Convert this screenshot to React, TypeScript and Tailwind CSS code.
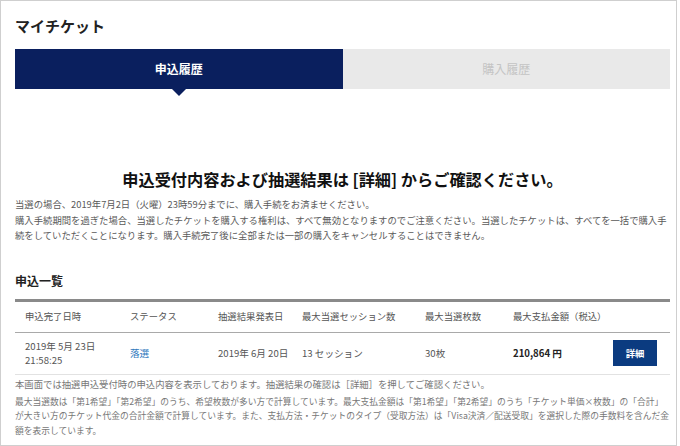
import React from "react";

const font = { fontFamily: '"Noto Sans CJK JP", "Noto Sans", sans-serif' };

const columns = "grid grid-cols-[105px_88px_84px_123px_88px_100px_44px_13px] pl-[10px]";

export default function App() {
  return (
    <div className="w-[680px] h-[446px] bg-white" style={font}>
      <div className="w-[677px] h-[446px] border border-[#cfcfcf] pl-[14px] pr-[6px] flex flex-col">
        {/* page title */}
        <h1 className="h-[48px] pt-[14px] text-[15px] leading-[22px] font-bold text-[#222]">
          マイチケット
        </h1>

        {/* tabs */}
        <div className="flex h-[40px]">
          <div className="relative flex-1 bg-[#0a1f5e] flex items-center justify-center text-white text-[12px] font-bold">
            申込履歴
            <span className="absolute left-1/2 -translate-x-1/2 top-full w-0 h-0 border-l-[7px] border-r-[7px] border-t-[7px] border-l-transparent border-r-transparent border-t-[#0a1f5e]" />
          </div>
          <div className="flex-1 bg-[#e9e9e9] flex items-center justify-center text-[#c4c4c4] text-[12px]">
            購入履歴
          </div>
        </div>

        {/* notice */}
        <h2 className="mt-[79px] text-center text-[16.2px] leading-[22px] font-bold text-[#111]">
          申込受付内容および抽選結果は [詳細] からご確認ください。
        </h2>
        <div className="mt-[7px] text-[9.36px] leading-[15.5px] text-[#5a5a5a] whitespace-nowrap">
          <p>当選の場合、2019年7月2日（火曜）23時59分までに、購入手続をお済ませください。</p>
          <p>購入手続期間を過ぎた場合、当選したチケットを購入する権利は、すべて無効となりますのでご注意ください。当選したチケットは、すべてを一括で購入手</p>
          <p>続をしていただくことになります。購入手続完了後に全部または一部の購入をキャンセルすることはできません。</p>
        </div>

        {/* list */}
        <h3 className="mt-[28px] text-[12px] leading-[18px] font-bold text-[#222]">申込一覧</h3>
        <div className="mt-[9px] border-t-[3px] border-[#8a8a8a]">
          <div className={`${columns} h-[31px] items-center border-b border-[#a9a9a9] text-[9.36px] text-[#555]`}>
            <span>申込完了日時</span>
            <span>ステータス</span>
            <span>抽選結果発表日</span>
            <span>最大当選セッション数</span>
            <span>最大当選枚数</span>
            <span>最大支払金額（税込）</span>
            <span />
            <span />
          </div>
          <div className={`${columns} h-[42px] items-center border-b border-[#e2e2e2] text-[9.6px] text-[#555]`}>
            <span className="leading-[14px]">
              2019年 5月 23日
              <br />
              21:58:25
            </span>
            <span className="text-[#2f78bd]">落選</span>
            <span>2019年 6月 20日</span>
            <span>13 セッション</span>
            <span>30枚</span>
            <span className="font-bold text-[#222]">210,864 円</span>
            <button className="h-[26px] w-[44px] bg-[#0b3b80] text-white text-[9.36px] font-bold">詳細</button>
            <span />
          </div>
        </div>

        {/* footnotes */}
        <div className="mt-[2px] text-[#777] whitespace-nowrap">
          <p className="text-[9.36px] leading-[15px]">本画面では抽選申込受付時の申込内容を表示しております。抽選結果の確認は［詳細］を押してご確認ください。</p>
          <div className="mt-[3px] text-[8.75px] leading-[14.5px]">
            <p>最大当選数は「第1希望」「第2希望」のうち、希望枚数が多い方で計算しています。最大支払金額は「第1希望」「第2希望」のうち「チケット単価×枚数」の「合計」</p>
            <p>が大きい方のチケット代金の合計金額で計算しています。また、支払方法・チケットのタイプ（受取方法）は「Visa決済／配送受取」を選択した際の手数料を含んだ金</p>
            <p>額を表示しています。</p>
          </div>
        </div>
      </div>
    </div>
  );
}
